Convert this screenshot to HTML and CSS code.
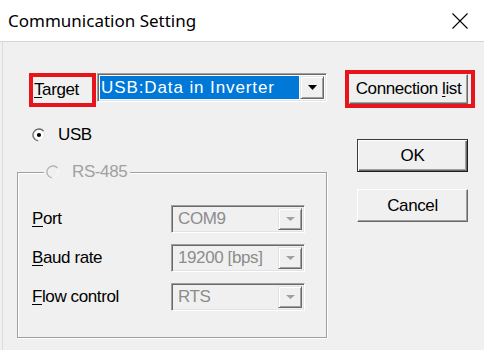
FILE: index.html
```html
<!DOCTYPE html>
<html lang="en">
<head>
<meta charset="UTF-8">
<title>Communication Setting</title>
<link rel="stylesheet" href="styles.css">
</head>
<body>
	<div class="titlebar">
		<span class="caption">Communication Setting</span>
		<svg class="close" width="16" height="16" viewBox="0 0 16 16">
			<path d="M0.5 0.5L15.5 15.5M15.5 0.5L0.5 15.5" stroke="#000" stroke-width="1.1" fill="none"/>
		</svg>
	</div>
	<div class="client">
		<div class="left">
			<div class="target-row">
				<label class="mark target-label"><u>T</u>arget</label>
				<div class="combo">
					<span class="combo-text sel">USB:Data in Inverter</span>
					<span class="drop">
						<svg width="9" height="5" viewBox="0 0 9 5"><polygon points="0,0 9,0 4.5,5" fill="#000"/></svg>
					</span>
				</div>
			</div>
			<div class="radio">
				<svg width="14" height="14" viewBox="0 0 14 14">
					<circle cx="7" cy="7" r="5.5" fill="#fff" stroke="#e6e6e6" stroke-width="1.2"/>
					<path d="M5.96 12.9A6 6 0 1 1 11.6 3.14" stroke="#707070" stroke-width="1.4" fill="none"/>
					<circle cx="7" cy="7" r="2.1" fill="#000"/>
				</svg>
				<span>USB</span>
			</div>
			<fieldset class="group">
				<legend class="radio off">
					<svg width="14" height="14" viewBox="0 0 14 14">
						<circle cx="7" cy="7" r="5.5" fill="#f0f0f0" stroke="#f6f6f6" stroke-width="1.2"/>
						<path d="M5.96 12.9A6 6 0 1 1 11.6 3.14" stroke="#b4b4b4" stroke-width="1.4" fill="none"/>
					</svg>
					<span>RS-485</span>
				</legend>
				<div class="fields">
					<div class="field">
						<span class="label"><u>P</u>ort</span>
						<div class="combo off">
							<span class="combo-text">COM9</span>
							<span class="drop">
								<svg width="9" height="4" viewBox="0 0 9 4"><polygon points="0,0 9,0 4.5,4" fill="#a0a0a0"/></svg>
							</span>
						</div>
					</div>
					<div class="field">
						<span class="label"><u>B</u>aud rate</span>
						<div class="combo off">
							<span class="combo-text">19200 [bps]</span>
							<span class="drop">
								<svg width="9" height="4" viewBox="0 0 9 4"><polygon points="0,0 9,0 4.5,4" fill="#a0a0a0"/></svg>
							</span>
						</div>
					</div>
					<div class="field">
						<span class="label"><u>F</u>low control</span>
						<div class="combo off">
							<span class="combo-text">RTS</span>
							<span class="drop">
								<svg width="9" height="4" viewBox="0 0 9 4"><polygon points="0,0 9,0 4.5,4" fill="#a0a0a0"/></svg>
							</span>
						</div>
					</div>
				</div>
			</fieldset>
		</div>
		<div class="right">
			<div class="mark conn">
				<button class="btn conn-btn">Connection <u>l</u>ist</button>
			</div>
			<button class="btn default ok">OK</button>
			<button class="btn cancel">Cancel</button>
		</div>
	</div>
</body>
</html>
```
FILE: styles.css
```css
body {
	margin: 0;
	background: #f0f0f0;
	font-family: "Liberation Sans", Arial, sans-serif;
	font-size: 17px;
	letter-spacing: -0.4px;
	color: #000;
}

u {
	text-decoration-thickness: 1px;
	text-underline-offset: 2px;
}

.titlebar {
	height: 41px;
	background: #fff;
	border-bottom: 1px solid #d4d4d4;
	display: flex;
	align-items: center;
	justify-content: space-between;
	padding: 0 16px 0 8px;
}

.caption {
	font-family: "Noto Sans", "Open Sans", sans-serif;
	font-size: 17px;
	letter-spacing: 0;
	line-height: 1;
}

.close {
	display: block;
}

.client {
	display: flex;
	height: 308px;
	margin-left: 2px;
	border-left: 1px solid #dcdcdc;
}

.left {
	margin-left: 14px;
	width: 310px;
	padding-top: 31px;
}

.target-row {
	display: flex;
	align-items: flex-start;
	padding-left: 12px;
}

.mark {
	border: 4px solid #e8141c;
	box-sizing: border-box;
}

.target-label {
	width: 67px;
	height: 34px;
	line-height: 26px;
	padding-left: 1px;
	background: #f0f0f0;
}

.combo {
	display: flex;
	box-sizing: border-box;
	height: 29px;
	width: 230px;
	margin-left: 1px;
	padding: 2px;
	background: #fff;
	border: 1px solid;
	border-color: #a0a0a0 #fff #fff #a0a0a0;
	box-shadow: inset 1px 1px 0 #696969, inset -1px -1px 0 #e3e3e3;
}

.combo-text {
	flex: 1;
	line-height: 23px;
	padding-left: 1px;
	white-space: nowrap;
}

.sel {
	background: #0078d7;
	color: #fff;
	letter-spacing: 0.9px;
	margin-right: 1px;
}

.drop {
	width: 24px;
	display: flex;
	align-items: center;
	justify-content: center;
	box-sizing: border-box;
	background: #f0f0f0;
	border: 1px solid;
	border-color: #e3e3e3 #696969 #696969 #e3e3e3;
	box-shadow: inset 1px 1px 0 #fff, inset -1px -1px 0 #a0a0a0;
}

.drop svg {
	display: block;
}

.radio {
	display: flex;
	align-items: center;
	gap: 12px;
	height: 20px;
	margin-top: 18px;
	padding-left: 15px;
}

.radio svg {
	display: block;
}

.group {
	margin: 17px 0 0 0;
	padding: 0 0 26px 14px;
	min-width: 0;
	border: 1px solid #a0a0a0;
	box-shadow: inset 1px 1px 0 #fff, 1px 1px 0 #fff;
}

.group .radio {
	margin: 0 0 0 12px;
	padding: 0 3px 0 2px;
	background: #f0f0f0;
}

.off {
	color: #a0a0a0;
}

.fields {
	display: flex;
	flex-direction: column;
	gap: 11px;
	padding-top: 23px;
}

.field {
	display: flex;
	align-items: center;
	height: 28px;
}

.label {
	width: 139px;
}

.combo.off {
	width: 134px;
	height: 28px;
	margin-left: 0;
	background: #f0f0f0;
	color: #8c8c8c;
}

.combo.off .combo-text {
	padding-left: 4px;
	line-height: 22px;
}

.right {
	margin-left: 18px;
	width: 130px;
	padding-top: 28px;
	display: flex;
	flex-direction: column;
}

.conn {
	height: 38px;
	padding-right: 3px;
}

.btn {
	display: block;
	box-sizing: border-box;
	margin: 0;
	padding: 0;
	font: inherit;
	letter-spacing: inherit;
	color: #000;
	background: #f0f0f0;
	border: 1px solid;
	border-color: #fff #696969 #696969 #fff;
	box-shadow: inset -1px -1px 0 #a0a0a0;
	text-align: center;
}

.conn-btn {
	width: 100%;
	height: 30px;
	border-top-color: #f0f0f0;
	border-left-color: #f0f0f0;
}

.ok {
	margin: 31px 0 0 12px;
	width: 111px;
	height: 33px;
	border-color: #3c3c3c #1e1e1e #1e1e1e #3c3c3c;
	box-shadow: inset 1px 1px 0 #fff, inset -1px -1px 0 #696969, inset -2px -2px 0 #a0a0a0;
}

.cancel {
	margin: 17px 0 0 12px;
	width: 111px;
	height: 33px;
}
```
